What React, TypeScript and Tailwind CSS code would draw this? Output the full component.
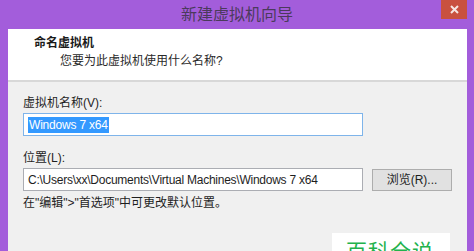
import React from 'react';

const ui = { fontFamily: '"Liberation Sans", "Noto Sans CJK SC", sans-serif' };

export default function App() {
  return (
    <div className="relative flex h-[251px] w-[474px] flex-col overflow-hidden bg-[#a35ddb]" style={ui}>
      {/* title bar */}
      <div className="relative flex h-[29px] shrink-0 items-center justify-center">
        <span className="text-[16px] leading-none text-[#4b3a5c]">新建虚拟机向导</span>
        <button className="absolute right-[7px] top-0 flex h-[19px] w-[26px] items-center justify-center bg-[#c9513f]">
          <svg width="9" height="9" viewBox="0 0 9 9">
            <path d="M1 1 L8 8 M8 1 L1 8" stroke="#f6e6e2" strokeWidth="2" />
          </svg>
        </button>
      </div>

      <div className="ml-[8px] mr-[7px] flex flex-1 flex-col">
        {/* header */}
        <div className="h-[53px] shrink-0 border-b-2 border-[#d8d8d8] bg-white pl-[26px] pt-[6px]">
          <div className="text-[12px] font-bold leading-[16px] text-[#1a1a1a]">命名虚拟机</div>
          <div className="mt-[2px] pl-[26px] text-[12px] leading-[16px] text-[#2a2a2a]">您要为此虚拟机使用什么名称?</div>
        </div>

        {/* body */}
        <div className="flex-1 bg-[#f0f0f0] pl-[15px] pt-[13px] text-[12px] leading-[16px] text-[#1e1e1e]">
          <div>虚拟机名称(V):</div>
          <div className="mt-[2px] flex h-[23px] w-[340px] items-center border border-[#7eb4ea] bg-white pl-[4px]">
            <span className="bg-[#3399ff] px-[1px] tracking-[-0.2px] text-white">Windows 7 x64</span>
          </div>

          <div className="mt-[14px]">位置(L):</div>
          <div className="mt-[2px] flex items-center gap-[9px]">
            <div className="flex h-[23px] w-[340px] items-center border border-[#abadb3] bg-white pl-[4px] tracking-[-0.25px]">
              C:\Users\xx\Documents\Virtual Machines\Windows 7 x64
            </div>
            <button className="mt-[1px] flex h-[22px] w-[80px] items-center justify-center border border-[#adadad] bg-[#e1e1e1] text-[12px] text-[#1e1e1e]">
              浏览(R)...
            </button>
          </div>
          <div className="mt-[4px]">在"编辑"&gt;"首选项"中可更改默认位置。</div>
        </div>
      </div>

      {/* watermark */}
      <div className="absolute left-[332px] top-[233px] h-[30px] w-[118px] bg-white pl-[14px] pt-[8px]">
        <span className="text-[21px] leading-none tracking-[1px] text-[#22b24c]">百科全说</span>
      </div>
    </div>
  );
}
